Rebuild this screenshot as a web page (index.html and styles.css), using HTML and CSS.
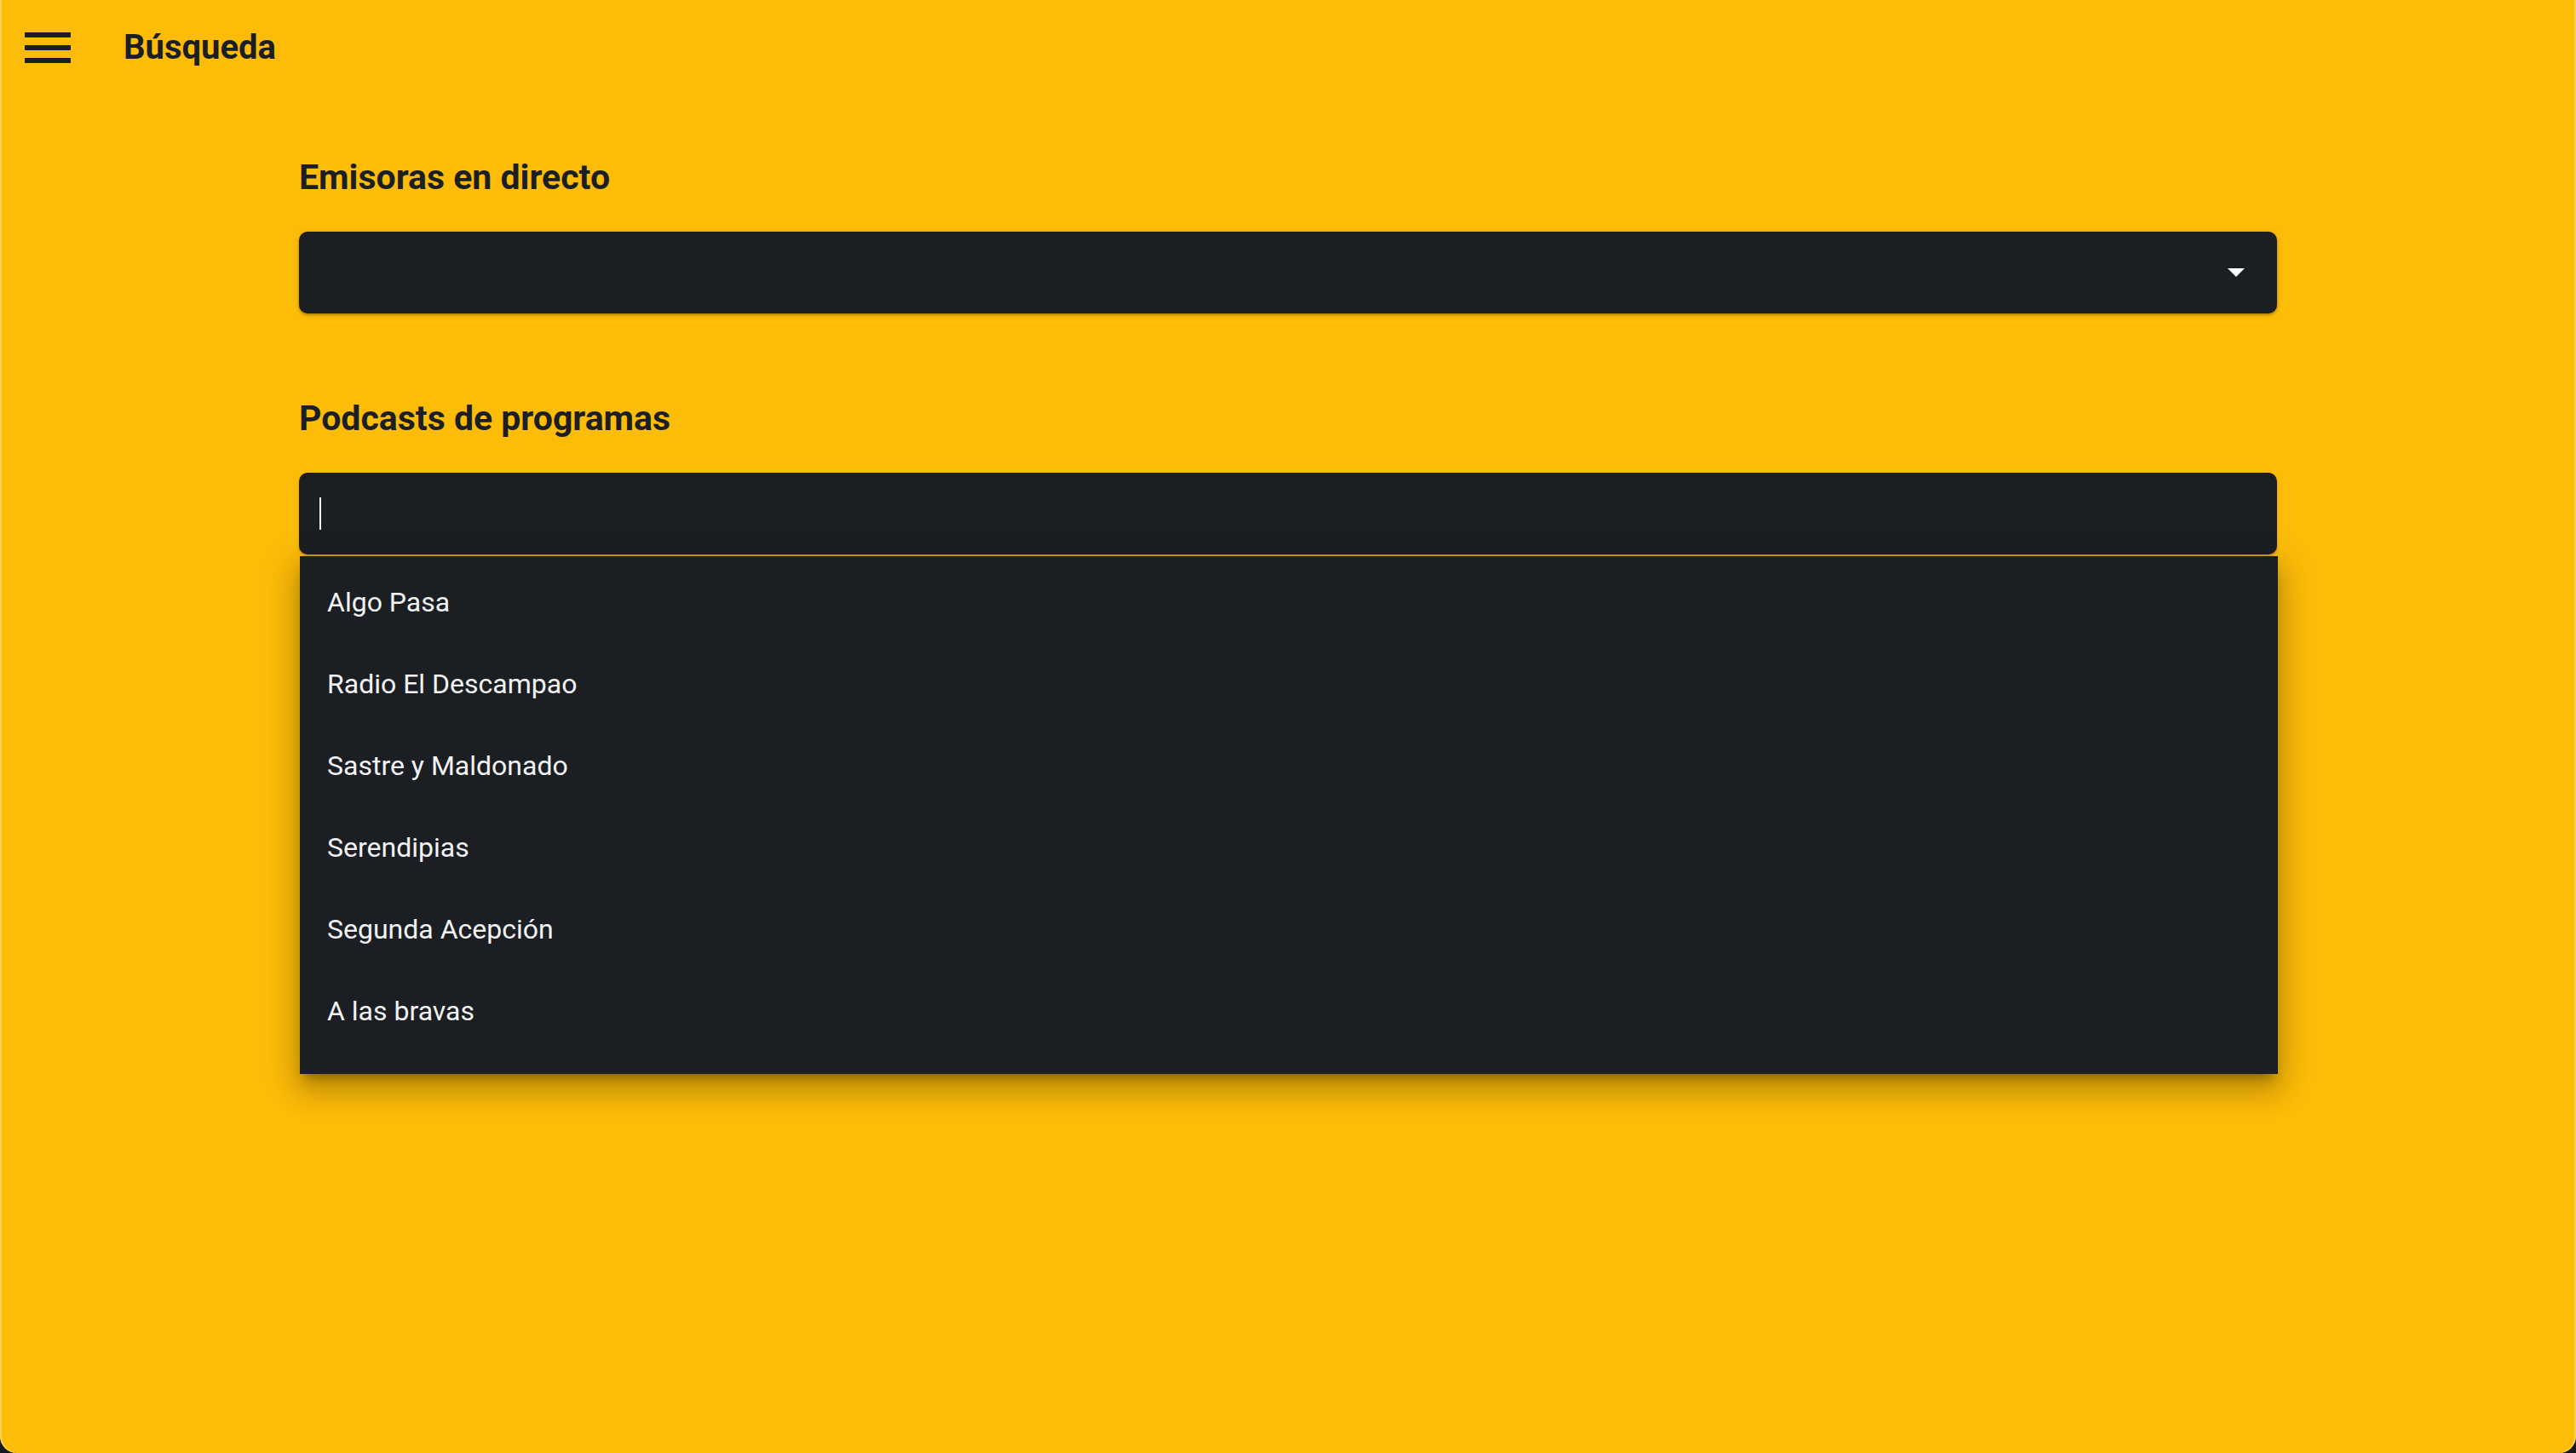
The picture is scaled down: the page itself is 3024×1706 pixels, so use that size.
FILE: index.html
```html
<!DOCTYPE html>
<html lang="es">
<head>
<meta charset="utf-8">
<title>Búsqueda</title>
<link rel="stylesheet" href="styles.css">
</head>
<body>
<div class="window">
  <header class="topbar">
    <button class="menu-btn" aria-label="Menú">
      <span class="bar"></span>
      <span class="bar"></span>
      <span class="bar"></span>
    </button>
    <h1 class="title">Búsqueda</h1>
  </header>

  <main class="content">
    <section class="section">
      <h2 class="section-title">Emisoras en directo</h2>
      <div class="field select">
        <span class="arrow"></span>
      </div>
    </section>

    <section class="section second">
      <h2 class="section-title">Podcasts de programas</h2>
      <div class="autocomplete">
        <div class="field input"><span class="caret"></span></div>
        <ul class="panel">
          <li class="option">Algo Pasa</li>
          <li class="option">Radio El Descampao</li>
          <li class="option">Sastre y Maldonado</li>
          <li class="option">Serendipias</li>
          <li class="option">Segunda Acepción</li>
          <li class="option">A las bravas</li>
        </ul>
      </div>
    </section>
  </main>
</div>
</body>
</html>
```

FILE: styles.css
```css
html {
  margin: 0;
  padding: 0;
  background: #16191d;
}

body {
  margin: 0;
  padding: 0;
  font-family: Roboto, "Liberation Sans", sans-serif;
  color: #1b1f23;
}

.window {
  height: 1706px;
  box-sizing: border-box;
  background: #fcbc08;
  border-radius: 0 0 20px 20px;
  box-shadow: inset 2px 0 0 #fdcf55, inset -2px 0 0 #fdcf55;
  overflow: hidden;
}

.topbar {
  height: 112px;
  display: flex;
  align-items: center;
  padding-left: 29px;
}

.menu-btn {
  display: flex;
  flex-direction: column;
  gap: 9px;
  width: 54px;
  padding: 0;
  margin: 0;
  border: 0;
  background: none;
}

.bar {
  display: block;
  width: 54px;
  height: 6px;
  background: #1b1f23;
}

.title {
  margin: 0 0 0 62px;
  font-size: 40px;
  font-weight: 700;
  line-height: 48px;
  color: #1b1f23;
}

.content {
  width: 2322px;
  margin: 72px auto 0;
}

.section-title {
  margin: 0 0 40px;
  font-size: 41px;
  font-weight: 700;
  line-height: 48px;
  color: #1b1f23;
}

.second {
  margin-top: 99px;
}

.field {
  height: 96px;
  box-sizing: border-box;
  background: #1b1f23;
  border-radius: 10px;
  display: flex;
  align-items: center;
}

.select {
  justify-content: flex-end;
  padding-right: 38px;
  box-shadow: 0 2px 3px rgba(0, 0, 0, 0.25), 0 1px 6px rgba(0, 0, 0, 0.12);
}

.arrow {
  width: 0;
  height: 0;
  border-left: 10px solid transparent;
  border-right: 10px solid transparent;
  border-top: 10px solid #ffffff;
}

.autocomplete {
  position: relative;
}

.input {
  padding-left: 24px;
  box-shadow: 0 2px 3px rgba(0, 0, 0, 0.22);
}

.caret {
  display: block;
  width: 2px;
  height: 38px;
  background: #ffffff;
}

.panel {
  position: absolute;
  left: 1px;
  right: -1px;
  top: calc(100% + 2px);
  margin: 0;
  padding: 6px 0 26px;
  list-style: none;
  background: #1b1f23;
  box-shadow: 0 10px 12px -6px rgba(0, 0, 0, 0.3), 0 20px 30px 3px rgba(0, 0, 0, 0.16), 0 8px 38px 7px rgba(0, 0, 0, 0.12);
}

.option {
  height: 96px;
  line-height: 96px;
  padding-left: 32px;
  font-size: 32px;
  font-weight: 400;
  color: #f2f2f2;
}
```
